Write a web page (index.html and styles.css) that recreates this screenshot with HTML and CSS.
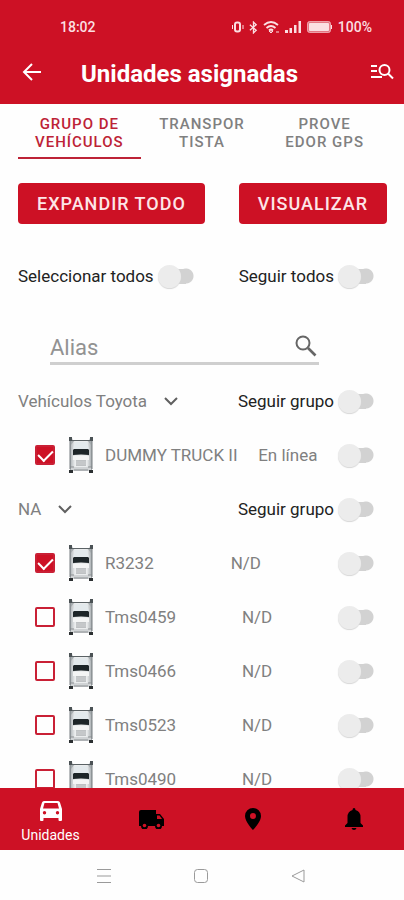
FILE: index.html
```
<!DOCTYPE html>
<html lang="es">
<head>
<meta charset="utf-8">
<meta name="viewport" content="width=device-width, initial-scale=1">
<title>Unidades asignadas</title>
<link rel="stylesheet" href="styles.css">
</head>
<body>
<svg class="defs" aria-hidden="true">
  <defs>
    <linearGradient id="cab" x1="0" x2="1" y1="0" y2="0">
      <stop offset="0" stop-color="#b9bec1"/><stop offset=".2" stop-color="#eceeef"/><stop offset=".8" stop-color="#eaeced"/><stop offset="1" stop-color="#b0b5b8"/>
    </linearGradient>
  </defs>
  <symbol id="truck" viewBox="0 0 26 38">
    <path d="M2 2h2l1 3h16l1-3h2v33H2z" fill="#a5abae"/>
    <path d="M1 1h3v4H1zM22 1h3v4h-3z" fill="#4b5255"/>
    <path d="M4 4h18v1H4z" fill="#5b6265"/>
    <path d="M3 9l3-4h14l3 4v25H3z" fill="url(#cab)"/>
    <path d="M7 6h12l2 7H5z" fill="#e3e9ec"/>
    <path d="M6 13h14l1 1v5q-8-1-16 0v-5z" fill="#1d2528"/>
    <path d="M5 20h16v4H5z" fill="#f4f5f5"/>
    <path d="M8 24h10v6H8z" fill="#bec1c3"/>
    <path d="M8 26h10M8 28h10" stroke="#ccced0" stroke-width="1"/>
    <path d="M3 31h20v4H3z" fill="#d0d3d5"/>
    <path d="M2 31h4M20 31h4M6 34h14" stroke="#8c9093" stroke-width="1"/>
    <path d="M2 5v28M24 5v28" stroke="#777d80" stroke-width="1"/>
    <path d="M1 34h4v3H1zM21 34h4v3h-4z" fill="#2c3032"/>
  </symbol>
  <symbol id="chevron" viewBox="0 0 14 9"><path d="M1 1l6 6 6-6" fill="none" stroke="#606060" stroke-width="2"/></symbol>
</svg>

<header class="top">
  <div class="status">
    <time>18:02</time>
    <div class="status-icons">
      <svg width="12" height="12" viewBox="0 0 12 12" fill="none" stroke="currentColor"><rect x="3" y="1.500" width="5" height="9" rx="2" stroke-width="2"/><path d="M.5 4v4M11 4v4"/></svg>
      <svg width="9" height="13" viewBox="0 0 10 14" fill="none" stroke="currentColor" stroke-width="1.500"><path d="M1 4l7 6-3 3V1l3 3-7 6"/></svg>
      <svg width="17" height="13" viewBox="0 0 17 13" fill="none" stroke="currentColor" stroke-width="1.800"><path d="M1 4q7-6 14 0M3.500 7q4.500-4 9 0M6 9.500q2-2 4 0"/><path d="M8 12l-2-2h4zM13 11h3" stroke-width="1"/></svg>
      <svg width="17" height="12" viewBox="0 0 17 12" fill="currentColor"><path d="M0 9h3v3H0zM4.500 7h2.500v5H4.500zM9 4h2.500v8H9zM13.500 0H16v12h-2.500z"/></svg>
      <svg width="26" height="12" viewBox="0 0 26 12"><rect x=".5" y=".5" width="23" height="11" rx="2" fill="currentColor" fill-opacity=".5" stroke="currentColor" stroke-opacity=".6"/><rect x="2" y="2" width="20" height="8" rx="1" fill="currentColor"/><path d="M24 4h1v4h-1z" fill="currentColor"/></svg>
      <span>100%</span>
    </div>
  </div>
  <div class="appbar">
    <button aria-label="Volver"><svg width="20" height="18" viewBox="0 0 20 18" fill="none" stroke="currentColor" stroke-width="2"><path d="M19 9H2M10 1L2 9l8 8"/></svg></button>
    <h1>Unidades asignadas</h1>
    <button aria-label="Buscar en la lista"><svg width="24" height="18" viewBox="0 0 24 18" fill="none" stroke="currentColor" stroke-width="2"><path d="M1 3h6M1 8h6M1 14h11"/><circle cx="14.500" cy="7" r="5"/><path d="M18 10.500l5 5"/></svg></button>
  </div>
</header>

<nav class="tabs" aria-label="Agrupación">
  <button class="tab active">GRUPO DE<br>VEHÍCULOS</button>
  <button class="tab">TRANSPOR<br>TISTA</button>
  <button class="tab">PROVE<br>EDOR GPS</button>
</nav>

<main>
  <div class="actions">
    <button class="primary">EXPANDIR TODO</button>
    <button class="primary">VISUALIZAR</button>
  </div>
  <div class="line all">
    <label class="follow">Seleccionar todos<input type="checkbox" class="switch"></label>
    <label class="follow">Seguir todos<input type="checkbox" class="switch"></label>
  </div>
  <div class="search">
    <input type="text" placeholder="Alias" aria-label="Alias">
    <button aria-label="Buscar"><svg width="22" height="22" viewBox="0 0 22 22" fill="none" stroke="currentColor" stroke-width="2"><circle cx="8" cy="8" r="6.500"/><path d="M13 13l7.500 7.500" stroke-width="2.600"/></svg></button>
  </div>

  <section>
    <div class="line">
      <button class="group">Vehículos Toyota<svg width="14" height="9"><use href="#chevron"/></svg></button>
      <label class="follow">Seguir grupo<input type="checkbox" class="switch"></label>
    </div>
    <div class="unit"><label><input type="checkbox" class="check" checked><svg width="26" height="38"><use href="#truck"/></svg>DUMMY TRUCK II</label><span>En línea</span><input type="checkbox" class="switch" aria-label="Seguir DUMMY TRUCK II"></div>
  </section>
  <section>
    <div class="line">
      <button class="group">NA<svg width="14" height="9"><use href="#chevron"/></svg></button>
      <label class="follow">Seguir grupo<input type="checkbox" class="switch"></label>
    </div>
    <div class="unit"><label><input type="checkbox" class="check" checked><svg width="26" height="38"><use href="#truck"/></svg>R3232</label><span>N/D</span><input type="checkbox" class="switch" aria-label="Seguir R3232"></div>
    <div class="unit"><label><input type="checkbox" class="check"><svg width="26" height="38"><use href="#truck"/></svg>Tms0459</label><span>N/D</span><input type="checkbox" class="switch" aria-label="Seguir Tms0459"></div>
    <div class="unit"><label><input type="checkbox" class="check"><svg width="26" height="38"><use href="#truck"/></svg>Tms0466</label><span>N/D</span><input type="checkbox" class="switch" aria-label="Seguir Tms0466"></div>
    <div class="unit"><label><input type="checkbox" class="check"><svg width="26" height="38"><use href="#truck"/></svg>Tms0523</label><span>N/D</span><input type="checkbox" class="switch" aria-label="Seguir Tms0523"></div>
    <div class="unit"><label><input type="checkbox" class="check"><svg width="26" height="38"><use href="#truck"/></svg>Tms0490</label><span>N/D</span><input type="checkbox" class="switch" aria-label="Seguir Tms0490"></div>
  </section>
</main>

<nav class="bottom" aria-label="Principal">
  <a href="#unidades" class="current"><svg width="22" height="20" viewBox="0 0 22 20"><path fill="currentColor" fill-rule="evenodd" d="M4 0h14q1.500 0 2 1.500L22 8v11q0 1-1 1h-1.500q-1 0-1-1v-2h-15v2q0 1-1 1H1q-1 0-1-1V8l2-6.500Q2.500 0 4 0zM4.500 2L3 7.500h16L17.500 2zM4.500 10a1.700 1.700 0 100 3.400 1.700 1.700 0 000-3.400zM17.500 10a1.700 1.700 0 100 3.400 1.700 1.700 0 000-3.400z"/></svg>Unidades</a>
  <a href="#viajes" aria-label="Viajes"><svg width="25" height="19" viewBox="0 0 25 19"><path fill="currentColor" d="M2 0h15v4h4l4 5v7h-2a3.500 3.500 0 01-7 0H9a3.500 3.500 0 01-7 0H0V2q0-2 2-2z"/><path fill="#cd1125" d="M18 5.500h2.500L23 9h-5z"/><circle cx="5.500" cy="15.500" r="1.800" fill="#cd1125"/><circle cx="19.500" cy="15.500" r="1.800" fill="#cd1125"/></svg></a>
  <a href="#mapa" aria-label="Mapa"><svg width="16" height="22" viewBox="0 0 16 22"><path fill="currentColor" fill-rule="evenodd" d="M8 0a8 8 0 018 8c0 6-8 14-8 14S0 14 0 8a8 8 0 018-8zm0 5a3 3 0 100 6 3 3 0 000-6z"/></svg></a>
  <a href="#alertas" aria-label="Alertas"><svg width="18" height="22" viewBox="0 0 18 22"><path fill="currentColor" d="M9 0q1.500 0 1.500 2Q15.500 3.500 15.500 9v6l2.500 2.500V19H0v-1.500L2.500 15V9q0-5.500 5-7Q7.500 0 9 0zM6.500 20h5Q11 22 9 22t-2.500-2z"/></svg></a>
</nav>
<footer class="system">
  <button aria-label="Recientes"><svg width="16" height="16" viewBox="0 0 16 16" stroke="currentColor"><path d="M1 1.500h14M1 8h14M1 14.500h14"/></svg></button>
  <button aria-label="Inicio"><svg width="16" height="16" viewBox="0 0 16 16" fill="none" stroke="currentColor"><rect x="1.500" y="1.500" width="13" height="13" rx="3"/></svg></button>
  <button aria-label="Atrás"><svg width="16" height="16" viewBox="0 0 16 16" fill="none" stroke="currentColor"><path d="M14 2v12L2 8z" stroke-linejoin="round"/></svg></button>
</footer>
</body>
</html>
```
FILE: styles.css
```
* { box-sizing: border-box; }
body {
  margin: 0;
  height: 100vh;
  display: flex;
  flex-direction: column;
  overflow: hidden;
  background: #fefefe;
  color: #808080;
  font: 17px/24px Roboto, sans-serif;
}
button {
  margin: 0;
  padding: 0;
  border: 0;
  background: none;
  color: inherit;
  font: inherit;
}
svg { display: block; flex: none; }
.defs { position: absolute; width: 0; height: 0; }

.top { flex: none; background: #cd1125; color: #fff; }
.status {
  display: flex;
  justify-content: space-between;
  align-items: center;
  padding: 17px 32px 0 60px;
  font-size: 14px;
  line-height: 20px;
  font-weight: 500;
  color: #fbdfe2;
}
.status-icons { display: flex; align-items: center; gap: 5px; }
.appbar {
  display: flex;
  align-items: center;
  height: 67px;
  padding: 2px 10px 0 22px;
}
.appbar h1 {
  flex: 1;
  margin: 0;
  padding: 4px 0 0 39px;
  font-size: 24px;
  line-height: 32px;
  font-weight: 700;
}

.tabs {
  flex: none;
  display: grid;
  grid-template-columns: repeat(3, 1fr);
  padding: 0 18px;
}
.tab {
  padding: 11px 0 6px;
  border-bottom: 2px solid transparent;
  font-size: 15px;
  line-height: 18px;
  font-weight: 500;
  letter-spacing: 1px;
}
.tab.active { color: #bd2336; border-color: #bd2336; }

main { flex: 1; min-height: 0; overflow: hidden; padding: 24px 30px 0 18px; }
.actions { display: flex; justify-content: space-between; margin-right: -13px; }
.primary {
  padding: 8px 19px;
  border-radius: 4px;
  background: #cd1125;
  color: #fde6e8;
  font-size: 18px;
  line-height: 25px;
  font-weight: 500;
  letter-spacing: 1px;
}
.line { display: flex; justify-content: space-between; align-items: center; height: 54px; }
.line.all { margin-top: 25px; }
.follow { display: flex; align-items: center; gap: 4px; color: #222; }
.switch {
  appearance: none;
  flex: none;
  display: flex;
  align-items: center;
  width: 36px;
  height: 24px;
  margin: 0;
  background:
    radial-gradient(circle at center, #d2d2d2 7px, transparent 8px) right center / 16px 16px no-repeat,
    linear-gradient(#d2d2d2, #d2d2d2) 12px center / 16px 15px no-repeat;
}
.switch::before {
  content: "";
  width: 23px;
  height: 23px;
  border-radius: 50%;
  background: #ececec;
  box-shadow: 0 1px 1px #d8d8d8;
}
.switch:checked { justify-content: flex-end; }

.search {
  display: flex;
  align-items: center;
  margin: 25px 55px 9px 32px;
  border-bottom: 3px solid #cfcfcf;
}
.search input {
  flex: 1;
  min-width: 0;
  padding: 6px 0 0;
  border: 0;
  outline: 0;
  background: none;
  font: 22px/28px Roboto, sans-serif;
}
.search input::placeholder { color: #929292; opacity: 1; }
.search button { padding: 2px 2px 0 0; color: #666; }

.group { display: flex; align-items: center; gap: 17px; }
.unit {
  display: flex;
  justify-content: space-between;
  align-items: center;
  height: 54px;
  padding-left: 17px;
}
.unit label { display: flex; align-items: center; }
.unit label svg { margin: 0 11px 0 13px; }
.check {
  appearance: none;
  width: 20px;
  height: 20px;
  margin: 0;
  border: 2px solid #c92035;
  border-radius: 2px;
}
.check:checked { background: #cd1125; }
.check:checked::before {
  content: "";
  display: block;
  width: 7px;
  height: 12px;
  margin: 0 auto;
  border: solid #fff;
  border-width: 0 2px 2px 0;
  transform: rotate(45deg);
}

.bottom {
  flex: none;
  display: grid;
  grid-template-columns: repeat(4, 1fr);
  height: 62px;
  background: #cd1125;
}
.bottom a {
  display: flex;
  flex-direction: column;
  align-items: center;
  justify-content: center;
  color: #000;
  font-size: 14px;
  line-height: 18px;
  text-decoration: none;
}
.bottom .current { gap: 5px; padding-top: 6px; color: #fff; }
.system {
  flex: none;
  display: flex;
  justify-content: space-around;
  align-items: center;
  height: 50px;
  padding: 2px 57px 0 55px;
  color: #9a9a9a;
}
```
